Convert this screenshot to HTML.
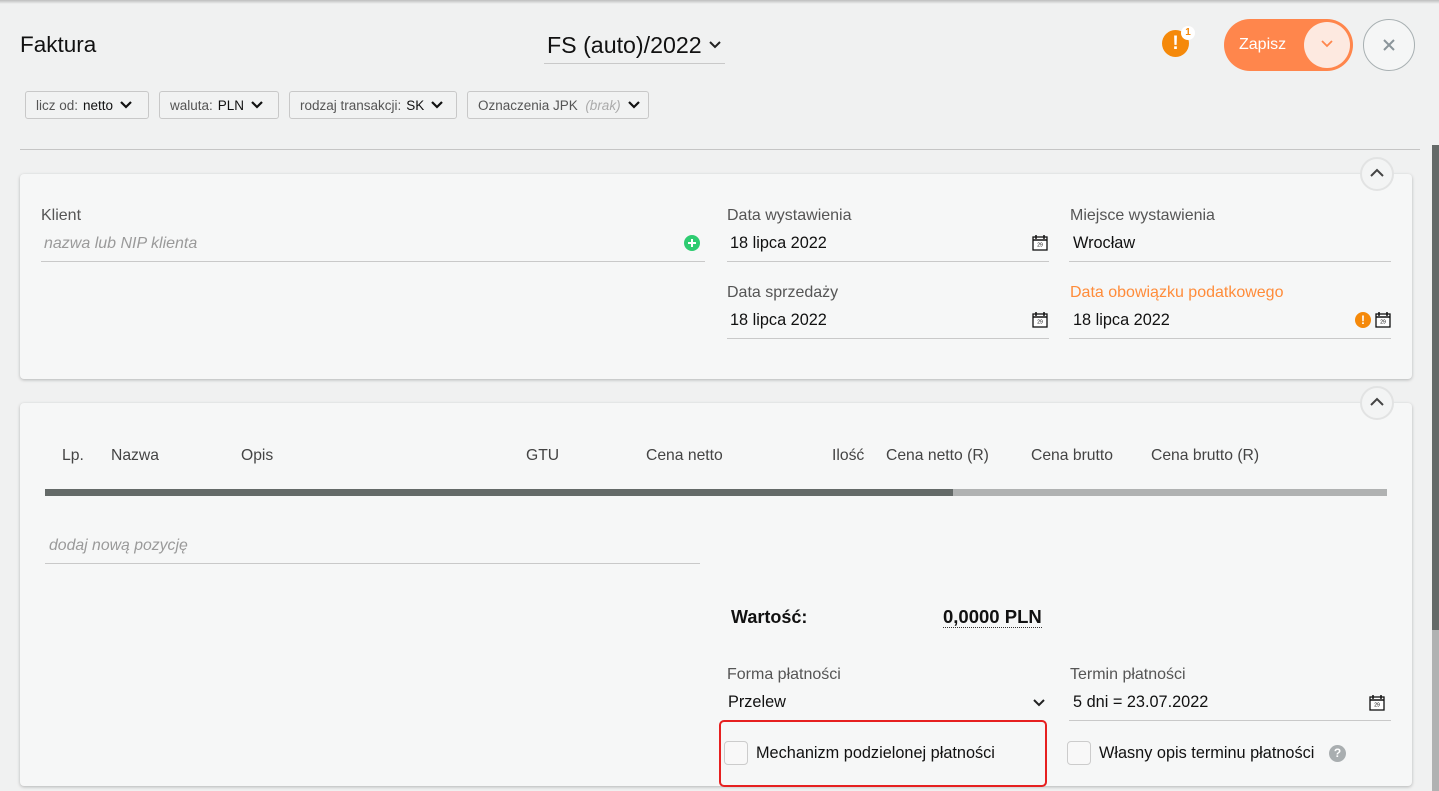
<!DOCTYPE html>
<html><head><meta charset="utf-8">
<style>
*{box-sizing:border-box;margin:0;padding:0}
body{width:1439px;height:791px;overflow:hidden;background:#f0f1f1;font-family:"Liberation Sans",sans-serif;color:#222;position:relative}
.a{position:absolute;white-space:nowrap}
.topsh{position:absolute;left:0;top:0;width:1439px;height:4px;background:linear-gradient(#bdbdbd,#f0f1f1)}
.pill{position:absolute;top:91px;height:28px;border:1px solid #c8c8c8;border-radius:3px;background:#f1f2f2;font-size:13.5px;color:#555;display:flex;align-items:center;padding-left:10px}
.pill b{font-weight:normal;color:#111;margin-left:5px}
.chev{display:inline-block;margin-left:6px}
.card{position:absolute;left:20px;width:1392px;background:#f6f7f7;border-radius:4px;box-shadow:0 1px 3px rgba(0,0,0,.25)}
.lbl{font-size:16px;color:#555}
.val{font-size:16.3px;color:#111}
.line{position:absolute;height:1px;background:#c9c9c9}
.up{position:absolute;width:34px;height:34px;border-radius:50%;border:2px solid #e2e3e3;background:#f3f4f4}
.th{font-size:15.7px;color:#444;top:447px}
.cb{position:absolute;width:24px;height:24px;border:1px solid #ccc;border-radius:4px;background:#f8f8f8}
</style></head><body>
<div class="topsh"></div>
<div class="a" style="left:20px;top:32px;font-size:22.5px;color:#111">Faktura</div>
<div class="a" style="left:547px;top:32px;font-size:23.2px;color:#111">FS (auto)/2022</div>
<svg class="a" style="left:708px;top:40px" width="14" height="10" viewBox="0 0 14 10"><path d="M2 2l5 5 5-5" stroke="#222" stroke-width="2" fill="none"/></svg>
<div class="line" style="left:544px;top:63px;width:181px"></div>

<div class="a" style="left:1162px;top:30px;width:27px;height:27px;border-radius:50%;background:#f5890a;color:#fff;font-weight:bold;font-size:19px;text-align:center;line-height:27px">!</div>
<div class="a" style="left:1181px;top:26px;width:14px;height:14px;border-radius:50%;background:#fff;color:#f5890a;font-weight:bold;font-size:10px;text-align:center;line-height:14px">1</div>
<div class="a" style="left:1224px;top:19px;width:129px;height:52px;border-radius:26px;background:#ff864c"></div>
<div class="a" style="left:1239px;top:36px;font-size:16px;color:#fff">Zapisz</div>
<div class="a" style="left:1304px;top:22px;width:46px;height:46px;border-radius:50%;background:#fde9e0"></div>
<svg class="a" style="left:1320px;top:39px" width="14" height="10" viewBox="0 0 14 10"><path d="M2 2l5 5 5-5" stroke="#ff864c" stroke-width="1.8" fill="none"/></svg>
<div class="a" style="left:1363px;top:19px;width:52px;height:52px;border-radius:50%;border:1px solid #a8b0b2;background:#f5f6f6"></div>
<svg class="a" style="left:1383px;top:39px" width="12" height="12" viewBox="0 0 12 12"><path d="M1 1l10 10M11 1L1 11" stroke="#8b959a" stroke-width="2"/></svg>

<div class="pill" style="left:25px;width:124px">licz od:<b>netto</b><svg class="chev" width="14" height="10" viewBox="0 0 14 10"><path d="M2 2l5 5 5-5" stroke="#111" stroke-width="2.2" fill="none"/></svg></div>
<div class="pill" style="left:159px;width:120px">waluta:<b>PLN</b><svg class="chev" width="14" height="10" viewBox="0 0 14 10"><path d="M2 2l5 5 5-5" stroke="#111" stroke-width="2.2" fill="none"/></svg></div>
<div class="pill" style="left:289px;width:168px">rodzaj transakcji:<b>SK</b><svg class="chev" width="14" height="10" viewBox="0 0 14 10"><path d="M2 2l5 5 5-5" stroke="#111" stroke-width="2.2" fill="none"/></svg></div>
<div class="pill" style="left:467px;width:182px">Oznaczenia JPK&nbsp;&nbsp;<i style="color:#aaa">(brak)</i><svg class="chev" width="14" height="10" viewBox="0 0 14 10"><path d="M2 2l5 5 5-5" stroke="#111" stroke-width="2.2" fill="none"/></svg></div>

<div class="line" style="left:20px;top:149px;width:1400px;background:#c5c5c5"></div>

<div class="a" style="left:1432px;top:145px;width:7px;height:485px;background:#646a68"></div>
<div class="a" style="left:1432px;top:630px;width:7px;height:161px;background:#b0b2b2"></div>

<div class="card" style="top:174px;height:205px"></div>
<div class="up" style="left:1360px;top:157px"></div>
<svg class="a" style="left:1369px;top:168px" width="16" height="10" viewBox="0 0 16 10"><path d="M2 8l6-6 6 6" stroke="#444" stroke-width="2" fill="none"/></svg>

<div class="a lbl" style="left:41px;top:207px">Klient</div>
<div class="a" style="left:44px;top:235px;font-size:16px;color:#9a9a9a;font-style:italic">nazwa lub NIP klienta</div>
<div class="a" style="left:684px;top:235px;width:16px;height:16px;border-radius:50%;background:#2ecc71"></div>
<svg class="a" style="left:684px;top:235px" width="16" height="16"><path d="M8 4v8M4 8h8" stroke="#fff" stroke-width="2"/></svg>
<div class="line" style="left:41px;top:261px;width:664px"></div>

<div class="a lbl" style="left:727px;top:207px">Data wystawienia</div>
<div class="a val" style="left:730px;top:234px">18 lipca 2022</div>
<div class="line" style="left:727px;top:261px;width:322px"></div>
<div class="a lbl" style="left:727px;top:284px">Data sprzedaży</div>
<div class="a val" style="left:730px;top:311px">18 lipca 2022</div>
<div class="line" style="left:727px;top:338px;width:322px"></div>

<div class="a lbl" style="left:1070px;top:207px">Miejsce wystawienia</div>
<div class="a val" style="left:1073px;top:234px">Wrocław</div>
<div class="line" style="left:1069px;top:261px;width:322px"></div>
<div class="a lbl" style="left:1070px;top:284px;color:#ff8c3a">Data obowiązku podatkowego</div>
<div class="a val" style="left:1073px;top:311px">18 lipca 2022</div>
<div class="line" style="left:1069px;top:338px;width:322px"></div>
<div class="a" style="left:1355px;top:312px;width:16px;height:16px;border-radius:50%;background:#f5890a;color:#fff;font-size:12px;font-weight:bold;text-align:center;line-height:16px">!</div>

<svg class="a" style="left:1032px;top:234px" width="16" height="17" viewBox="0 0 16 17"><rect x="1" y="3" width="14" height="13" fill="#fff" stroke="#111" stroke-width="1.3"/><path d="M1 6h14M4 1v4M12 1v4" stroke="#111" stroke-width="1.5"/><text x="8" y="12.5" font-size="5" text-anchor="middle" font-family="Liberation Sans">29</text></svg>
<svg class="a" style="left:1032px;top:311px" width="16" height="17" viewBox="0 0 16 17"><rect x="1" y="3" width="14" height="13" fill="#fff" stroke="#111" stroke-width="1.3"/><path d="M1 6h14M4 1v4M12 1v4" stroke="#111" stroke-width="1.5"/><text x="8" y="12.5" font-size="5" text-anchor="middle" font-family="Liberation Sans">29</text></svg>
<svg class="a" style="left:1375px;top:311px" width="16" height="17" viewBox="0 0 16 17"><rect x="1" y="3" width="14" height="13" fill="#fff" stroke="#111" stroke-width="1.3"/><path d="M1 6h14M4 1v4M12 1v4" stroke="#111" stroke-width="1.5"/><text x="8" y="12.5" font-size="5" text-anchor="middle" font-family="Liberation Sans">29</text></svg>

<div class="card" style="top:403px;height:383px"></div>
<div class="up" style="left:1360px;top:386px"></div>
<svg class="a" style="left:1369px;top:397px" width="16" height="10" viewBox="0 0 16 10"><path d="M2 8l6-6 6 6" stroke="#444" stroke-width="2" fill="none"/></svg>

<div class="a th" style="left:62px">Lp.</div>
<div class="a th" style="left:111px">Nazwa</div>
<div class="a th" style="left:241px">Opis</div>
<div class="a th" style="left:526px">GTU</div>
<div class="a th" style="left:646px">Cena netto</div>
<div class="a th" style="left:832px">Ilość</div>
<div class="a th" style="left:886px">Cena netto (R)</div>
<div class="a th" style="left:1031px">Cena brutto</div>
<div class="a th" style="left:1151px">Cena brutto (R)</div>
<div class="a" style="left:45px;top:489px;width:908px;height:7px;background:#646a68"></div>
<div class="a" style="left:953px;top:489px;width:434px;height:7px;background:#b0b2b2"></div>

<div class="a" style="left:49px;top:537px;font-size:15.8px;color:#9a9a9a;font-style:italic">dodaj nową pozycję</div>
<div class="line" style="left:45px;top:563px;width:655px"></div>

<div class="a" style="left:731px;top:607px;font-size:18px;font-weight:bold;color:#111">Wartość:</div>
<div class="a" style="left:943px;top:607px;font-size:18.5px;font-weight:bold;color:#111;border-bottom:1px dotted #333;line-height:20px">0,0000 PLN</div>

<div class="a lbl" style="left:727px;top:666px">Forma płatności</div>
<div class="a val" style="left:728px;top:693px">Przelew</div>
<svg class="a" style="left:1032px;top:698px" width="14" height="10" viewBox="0 0 14 10"><path d="M2 2l5 5 5-5" stroke="#222" stroke-width="2" fill="none"/></svg>
<div class="a lbl" style="left:1070px;top:666px">Termin płatności</div>
<div class="a val" style="left:1073px;top:693px">5 dni = 23.07.2022</div>
<div class="line" style="left:1069px;top:720px;width:322px"></div>
<svg class="a" style="left:1369px;top:694px" width="16" height="17" viewBox="0 0 16 17"><rect x="1" y="3" width="14" height="13" fill="#fff" stroke="#111" stroke-width="1.3"/><path d="M1 6h14M4 1v4M12 1v4" stroke="#111" stroke-width="1.5"/><text x="8" y="12.5" font-size="5" text-anchor="middle" font-family="Liberation Sans">29</text></svg>

<div class="a" style="left:719px;top:720px;width:328px;height:67px;border:2px solid #e62020;border-radius:5px"></div>
<div class="cb" style="left:724px;top:741px"></div>
<div class="a val" style="left:756px;top:744px">Mechanizm podzielonej płatności</div>
<div class="cb" style="left:1067px;top:741px"></div>
<div class="a val" style="left:1099px;top:744px">Własny opis terminu płatności</div>
<div class="a" style="left:1329px;top:745px;width:17px;height:17px;border-radius:50%;background:#a9aeb0;color:#fff;font-size:12px;font-weight:bold;text-align:center;line-height:17px">?</div>
</body></html>
